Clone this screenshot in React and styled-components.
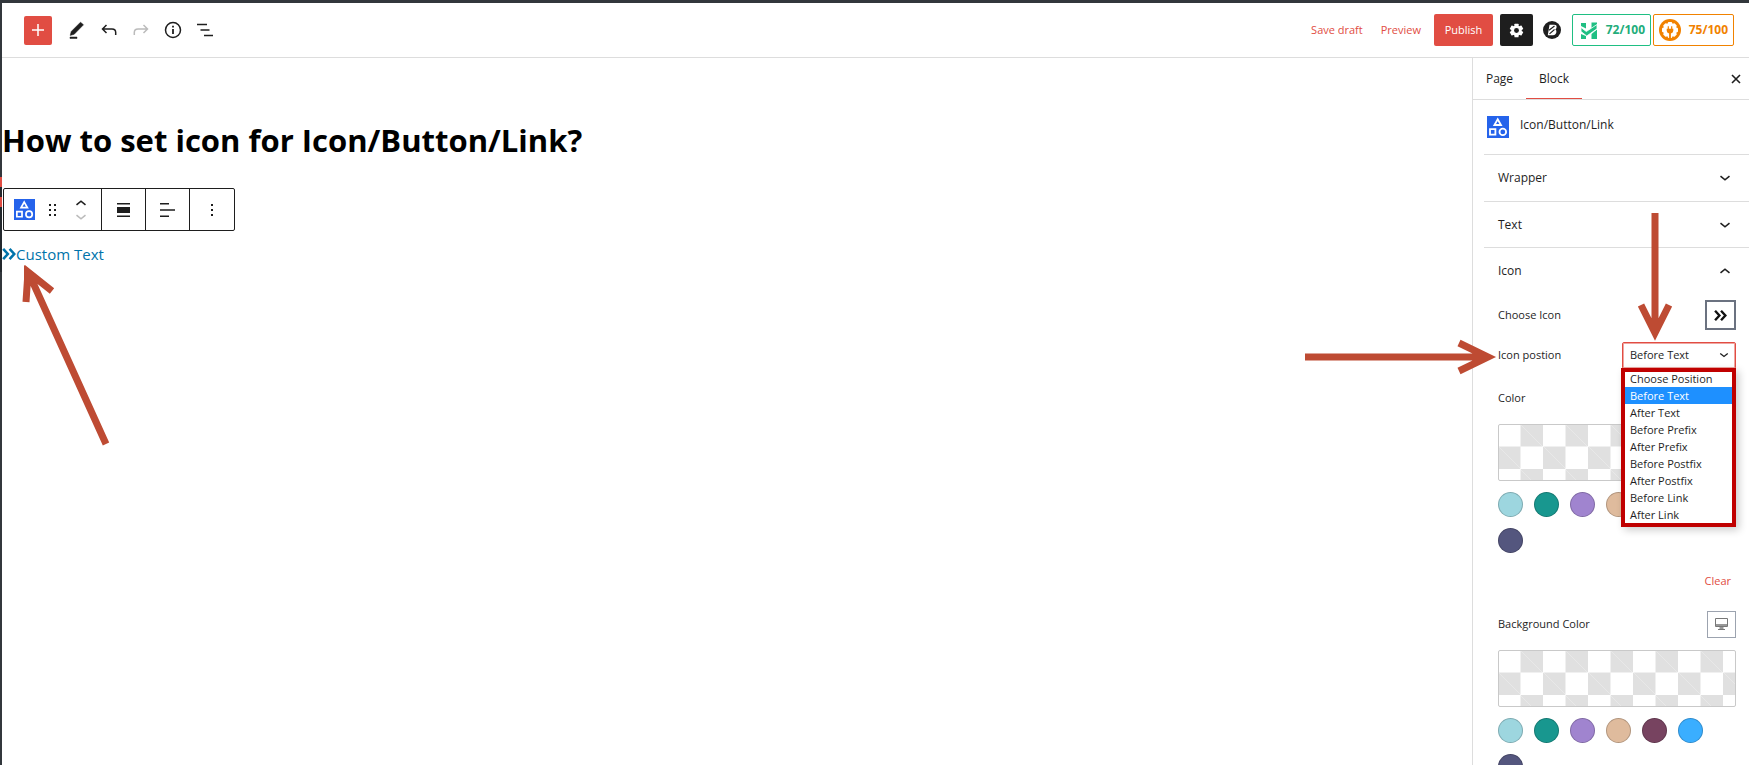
import React, { useState } from "react";
import styled, { createGlobalStyle } from "styled-components";

const ink = "#1e1e1e";
const red = "#e14d43";
const line = "#dddddd";
const arrowRed = "#be4b33";

const GlobalStyle = createGlobalStyle`
  *, *::before, *::after { box-sizing: border-box; }
  body { margin: 0; background: #fff; color: ${ink}; font: 11px/16px "Open Sans", "Noto Sans", sans-serif; }
  button, select { font: inherit; color: inherit; margin: 0; }
  h1, h2, p, ul { margin: 0; padding: 0; }
  svg { display: block; flex: none; }
`;

const Shell = styled.div`
  display: flex;
  height: 100vh;
  overflow: hidden;
  border-top: 3px solid #32373c;
`;

const Rail = styled.div`
  flex: none;
  width: 2px;
  background: linear-gradient(
    #32373c 0 174px, ${red} 174px 184px, #23282d 184px 194px, ${red} 194px 204px,
    #23282d 204px 269px, #32373c 269px
  );
`;

const Editor = styled.div`
  flex: 1;
  min-width: 0;
  display: flex;
  flex-direction: column;
`;

const Header = styled.header`
  flex: none;
  display: flex;
  align-items: center;
  justify-content: space-between;
  height: 55px;
  padding: 0 15px 0 22px;
  border-bottom: 1px solid ${line};
`;

const Tools = styled.div`
  display: flex;
  align-items: center;
  gap: 8px;
`;

const Actions = styled.div`
  display: flex;
  align-items: center;
`;

const IconButton = styled.button`
  display: flex;
  align-items: center;
  justify-content: center;
  width: ${(p) => p.$w || 24}px;
  height: ${(p) => p.$h || 24}px;
  padding: 0;
  border: 0;
  border-radius: 2px;
  background: ${(p) => p.$bg || "transparent"};
  color: ${(p) => p.$color || ink};
`;

const AddButton = styled(IconButton)`
  margin-right: 5px;
`;

const GearButton = styled(IconButton)`
  margin: 0 9px 0 7px;
`;

const LinkButton = styled.button`
  padding: 0;
  border: 0;
  background: none;
  color: ${red};
  margin-right: ${(p) => p.$after || 0}px;
`;

const Publish = styled.button`
  height: 32px;
  width: 59px;
  padding: 0;
  border: 0;
  border-radius: 2px;
  background: ${red};
  color: #fff;
`;

const Score = styled.button`
  display: flex;
  align-items: center;
  justify-content: space-between;
  width: ${(p) => p.$w}px;
  height: 32px;
  margin-left: ${(p) => p.$before}px;
  padding: 0 5px;
  border: 1px solid ${(p) => p.$color};
  border-radius: 2px;
  background: #fff;
  color: ${(p) => p.$ink || p.$color};
  font-size: 12px;
  font-weight: 700;
`;

const Lead = styled.span`
  padding-left: 3px;
`;

const Body = styled.div`
  position: relative;
  flex: 1;
  min-height: 0;
  display: flex;
`;

const Canvas = styled.main`
  flex: 1;
  min-width: 0;
  padding: 61px 0 0;
`;

const Title = styled.h1`
  color: #000;
  font-size: 31px;
  line-height: 42px;
  font-weight: 700;
`;

const BlockToolbar = styled.div`
  display: inline-flex;
  height: 43px;
  margin: 27px 0 0 1px;
  border: 1px solid ${ink};
  border-radius: 2px;
`;

const Group = styled.div`
  display: flex;
  align-items: center;
  justify-content: center;
  width: ${(p) => p.$w}px;
  gap: 4px;
  & + & { border-left: 1px solid ${ink}; }
`;

const Movers = styled.div`
  display: flex;
  flex-direction: column;
`;

const CustomLink = styled.a`
  display: flex;
  align-items: center;
  width: fit-content;
  margin-top: 11px;
  color: #0073aa;
  font-size: 15px;
  line-height: 24px;
  text-decoration: none;
`;

const Sidebar = styled.aside`
  flex: none;
  width: 277px;
  overflow: hidden auto;
  scrollbar-width: none;
  border-left: 1px solid ${line};
`;

const Tabs = styled.div`
  display: flex;
  align-items: center;
  height: 42px;
  padding-right: 4px;
  border-bottom: 1px solid ${line};
`;

const Tab = styled.button`
  align-self: stretch;
  width: ${(p) => p.$w}px;
  padding: 0;
  border: 0;
  background: none;
  box-shadow: ${(p) => (p.$active ? `inset 0 -1px ${red}` : "none")};
  font-size: 12px;
`;

const Spacer = styled.div`
  flex: 1;
`;

const BlockCard = styled.div`
  display: flex;
  gap: 11px;
  height: 54px;
  padding: 16px 14px 0;
`;

const CardTitle = styled.h2`
  font-size: 12px;
  font-weight: 500;
  line-height: 18px;
`;

const Panels = styled.div`
  padding-left: 11px;
`;

const PanelToggle = styled.button`
  display: flex;
  align-items: center;
  justify-content: space-between;
  width: 100%;
  height: ${(p) => p.$h || 47}px;
  padding: 0 18px 0 14px;
  border: 0;
  border-top: 1px solid ${line};
  background: none;
  font-size: 12px;
  font-weight: 500;
`;

const PanelBody = styled.div`
  padding: 5px 13px 0 14px;
`;

const Field = styled.div`
  display: flex;
  align-items: center;
  justify-content: space-between;
  height: ${(p) => p.$h}px;
  margin-bottom: ${(p) => p.$after || 0}px;
`;

const Framed = styled.button`
  display: flex;
  align-items: center;
  justify-content: center;
  width: ${(p) => p.$w}px;
  height: ${(p) => p.$h}px;
  padding: 0;
  border: ${(p) => p.$b}px solid ${(p) => p.$color};
  background: #fff;
`;

const SelectWrap = styled.div`
  position: relative;
  display: flex;
  align-items: center;
  width: 114px;
  height: 27px;
`;

const Select = styled.select`
  appearance: none;
  width: 100%;
  height: 100%;
  padding: 0 24px 0 7px;
  border: 1px solid ${red};
  border-radius: 2px;
  outline: 0;
  background: #fff;
  box-shadow: inset 0 0 0 1px ${red}80;
`;

const SelectChevron = styled.span`
  position: absolute;
  right: 7px;
  pointer-events: none;
`;

const Options = styled.ul`
  position: absolute;
  z-index: 1;
  top: 26px;
  left: -1px;
  right: 0;
  border: 4px solid #c00000;
  background: #fff;
  box-shadow: 3px 3px 8px rgba(0, 0, 0, 0.2);
  list-style: none;
`;

const Option = styled.li`
  height: 17px;
  padding-left: 5px;
  line-height: 17px;
  background: ${(p) => (p.$on ? "#1e90ff" : "#fff")};
  color: ${(p) => (p.$on ? "#fff" : ink)};
  &:first-child { height: 15px; line-height: 14px; }
`;

const Checker = styled.button`
  display: block;
  width: 100%;
  height: 57px;
  border: 1px solid #c9c9c9;
  border-radius: 2px;
  background-color: #fff;
  background-image:
    linear-gradient(45deg, #e0e0e0 25%, transparent 25%, transparent 75%, #e0e0e0 75%),
    linear-gradient(45deg, #e0e0e0 25%, transparent 25%, transparent 75%, #e0e0e0 75%);
  background-size: 45px 45px;
  background-position: 0 0, calc(45px / 2) calc(45px / 2);
  background-origin: border-box;
`;

const Swatches = styled.div`
  display: flex;
  flex-wrap: wrap;
  gap: 11px;
  padding-top: 11px;
`;

const Swatch = styled.button`
  width: 25px;
  height: 25px;
  padding: 0;
  border: 1px solid rgba(0, 0, 0, 0.2);
  border-radius: 50%;
  background: ${(p) => p.$color};
`;

const ClearRow = styled.div`
  display: flex;
  justify-content: flex-end;
  padding: 20px 5px 19px 0;
`;

const Arrow = styled.svg`
  position: absolute;
  z-index: 2;
  pointer-events: none;
  top: ${(p) => p.$top}px;
  ${(p) => (p.$left !== undefined ? `left: ${p.$left}px;` : `right: ${p.$right}px;`)}
`;

const BlockIcon = ({ w = 22, h = 22 }) => (
  <svg width={w} height={h} viewBox="0 0 22 22">
    <path fill="#2563eb" d="M0 0h22v22H0z" />
    <g fill="none" stroke="#fff" strokeWidth="1.8">
      <path d="M10.700 3.200 14 9H7.400z" />
      <path d="M3 13.200h5.400v5.400H3z" />
      <circle cx="15.800" cy="15.900" r="3.300" />
    </g>
  </svg>
);

const Chevron = ({ up, w = 12, faint }) => (
  <svg width={w} height={w} viewBox="0 0 12 12" fill="none" stroke={faint ? "#bbb" : ink} strokeWidth="1.6">
    <path d={up ? "M1.500 7.800 6 4.200l4.500 3.600" : "M1.500 4.200 6 7.800l4.500-3.600"} />
  </svg>
);

const Guillemets = ({ w, color }) => (
  <svg width={w} height={w} viewBox="0 0 12 12" fill="none" stroke={color} strokeWidth="2.2">
    <path d="M1 1.600 5 6l-4 4.400M6.500 1.600l4 4.400-4 4.400" />
  </svg>
);

const Undo = ({ flip }) => (
  <svg width="16" height="14" viewBox="0 0 16 14" fill="none" stroke="currentColor" strokeWidth="1.5">
    <g transform={flip ? "matrix(-1 0 0 1 16 0)" : undefined}>
      <path d="M5.500 2 1.500 6l4 4M1.500 6h9.500q3.700 0 3.700 3.500V12" />
    </g>
  </svg>
);

const Gear = () => (
  <svg width="15" height="15" viewBox="0 0 16 16">
    <g fill="#fff">
      {[0, 60, 120].map((a) => (
        <rect key={a} x="5.800" y="0.800" width="4.400" height="14.400" rx="0.600" transform={`rotate(${a} 8 8)`} />
      ))}
      <circle cx="8" cy="8" r="5.500" />
    </g>
    <circle cx="8" cy="8" r="2.600" fill={ink} />
  </svg>
);

const BadgeB = () => (
  <svg width="18" height="18" viewBox="0 0 18 18">
    <circle cx="9" cy="9" r="9" fill={ink} />
    <path fill="#fff" d="M6.500 3.800h4.700q2.600 0 2.400 2.400-.1 1.500-1.200 2.400 1.200.8 1 2.500-.3 3.100-3.500 3.100H4.800z" />
    <path stroke={ink} strokeWidth="1.100" d="M6 9.300 11.500 5M6.500 12.800l5-4.300" />
  </svg>
);

const SeoMark = () => (
  <svg width="16" height="17" viewBox="0 0 16 17" fill="#1fbf83">
    <path d="M0 1h5v5.500L0 4zM10.500.500H16V4l-5.500 4zM0 12l5 2v3H0zM10.500 12l5.500-4.500V17h-5.500z" />
    <path d="m0 5.500 5.300 4L16 2.500v4.300L5.700 14 0 9.500z" stroke="#fff" strokeWidth=".8" />
  </svg>
);

const PlugMark = () => (
  <svg width="22" height="22" viewBox="0 0 22 22">
    <circle cx="11" cy="11" r="11" fill="#f18200" />
    <g fill="#fff">
      {[0, 45, 90, 135].map((a) => (
        <rect key={a} x="8.800" y="3" width="4.400" height="16" rx="1" transform={`rotate(${a} 11 11)`} />
      ))}
      <circle cx="11" cy="11" r="7" />
    </g>
    <path fill="#f18200" d="M8.700 7.300h1.200v2.500h2.200V7.300h1.200v2.500h1v2q0 2.200-2.400 2.700v5h-1.800v-5q-2.400-.5-2.400-2.700v-2h1z" />
  </svg>
);

const options = [
  "Choose Position", "Before Text", "After Text", "Before Prefix", "After Prefix",
  "Before Postfix", "After Postfix", "Before Link", "After Link",
];

const palette = ["#9dd6df", "#18978f", "#a084cf", "#dfbb9d", "#774360", "#3aaeff", "#54567e"];

function Palette({ label }) {
  return (
    <>
      <Checker aria-label={`${label}: none selected`} />
      <Swatches>
        {palette.map((c) => (
          <Swatch key={c} $color={c} aria-label={`${label} ${c}`} />
        ))}
      </Swatches>
    </>
  );
}

export default function App() {
  const [position, setPosition] = useState("Before Text");
  return (
    <>
      <GlobalStyle />
      <Shell>
        <Rail />
        <Editor>
          <Header>
            <Tools>
              <AddButton $w={28} $h={29} $bg={red} $color="#fff" aria-label="Add block">
                <svg width="12" height="12" viewBox="0 0 12 12" stroke="#fff" strokeWidth="1.500"><path d="M6 0v12M0 6h12" /></svg>
              </AddButton>
              <IconButton aria-label="Edit">
                <svg width="16" height="18" viewBox="0 0 16 18" fill={ink}>
                  <path d="m11.500 1.200 3 2.600L5.200 13.300 1.200 14.400 2.200 10.500zM1 16h7v1.500H1z" stroke={ink} strokeWidth=".5" />
                </svg>
              </IconButton>
              <IconButton aria-label="Undo"><Undo /></IconButton>
              <IconButton aria-label="Redo" $color="#bbb"><Undo flip /></IconButton>
              <IconButton aria-label="Details">
                <svg width="18" height="18" viewBox="0 0 18 18" fill="none" stroke={ink} strokeWidth="1.500">
                  <circle cx="9" cy="9" r="7.500" /><path strokeWidth="1.800" d="M9 8v5M9 4.800v1.800" />
                </svg>
              </IconButton>
              <IconButton aria-label="List view">
                <svg width="18" height="14" viewBox="0 0 18 14" stroke={ink} strokeWidth="1.500">
                  <path d="M1 1.500h10M4.500 7h9M8 12.500h9" />
                </svg>
              </IconButton>
            </Tools>
            <Actions>
              <LinkButton $after={18}>Save draft</LinkButton>
              <LinkButton $after={13}>Preview</LinkButton>
              <Publish>Publish</Publish>
              <GearButton $w={33} $h={32} $bg={ink} aria-label="Settings"><Gear /></GearButton>
              <IconButton $w={20} aria-label="Templates"><BadgeB /></IconButton>
              <Score $w={79} $before={10} $color="#1fbf83" $ink="#23ad7b"><Lead><SeoMark /></Lead>72/100</Score>
              <Score $w={81} $before={2} $color="#f18200"><PlugMark />75/100</Score>
            </Actions>
          </Header>
          <Body>
            <Canvas>
              <Title>How to set icon for Icon/Button/Link?</Title>
              <BlockToolbar role="toolbar" aria-label="Block tools">
                <Group $w={97}>
                  <IconButton aria-label="Icon/Button/Link"><BlockIcon w={21} h={21} /></IconButton>
                  <IconButton aria-label="Drag">
                    <svg width="8" height="14" viewBox="0 0 8 14" fill={ink}>
                      {[0, 5, 10].map((y) => <path key={y} d={`M0 ${y + 1}h2v2H0zM5 ${y + 1}h2v2H5z`} />)}
                    </svg>
                  </IconButton>
                  <Movers>
                    <IconButton $h={14} aria-label="Move up"><Chevron up /></IconButton>
                    <IconButton $h={14} aria-label="Move down"><Chevron faint /></IconButton>
                  </Movers>
                </Group>
                <Group $w={44}>
                  <IconButton aria-label="Align">
                    <svg width="13" height="14" viewBox="0 0 13 14" fill={ink}><path d="M0 0h13v1.500H0zM0 4h13v6H0zM0 12.500h13V14H0z" /></svg>
                  </IconButton>
                </Group>
                <Group $w={44}>
                  <IconButton aria-label="Text align">
                    <svg width="15" height="14" viewBox="0 0 15 14" fill={ink}><path d="M0 0h9v1.500H0zM0 6.200h15v1.500H0zM0 12.500h9V14H0z" /></svg>
                  </IconButton>
                </Group>
                <Group $w={45}>
                  <IconButton aria-label="Options">
                    <svg width="2" height="14" viewBox="0 0 2 14" fill={ink}><path d="M0 1h2v2H0zM0 6h2v2H0zM0 11h2v2H0z" /></svg>
                  </IconButton>
                </Group>
              </BlockToolbar>
              <CustomLink href="#custom"><Guillemets w={14} color="#0073aa" />Custom Text</CustomLink>
            </Canvas>

            <Sidebar>
              <Tabs>
                <Tab $w={53}>Page</Tab>
                <Tab $w={56} $active>Block</Tab>
                <Spacer />
                <IconButton $w={18} aria-label="Close settings">
                  <svg width="10" height="10" viewBox="0 0 10 10" stroke={ink} strokeWidth="1.600"><path d="m1 1 8 8M9 1 1 9" /></svg>
                </IconButton>
              </Tabs>
              <BlockCard>
                <BlockIcon />
                <CardTitle>Icon/Button/Link</CardTitle>
              </BlockCard>
              <Panels>
                <PanelToggle>Wrapper<Chevron /></PanelToggle>
                <PanelToggle $h={46}>Text<Chevron /></PanelToggle>
                <PanelToggle>Icon<Chevron up /></PanelToggle>
                <PanelBody>
                  <Field $h={32}>
                    Choose Icon
                    <Framed $w={31} $h={30} $b={2} $color="#6b7280" aria-label="Choose Icon"><Guillemets w={13} color="#111" /></Framed>
                  </Field>
                  <Field $h={48}>
                    <label htmlFor="icon-position">Icon postion</label>
                    <SelectWrap>
                      <Select id="icon-position" value={position} onChange={(e) => setPosition(e.target.value)}>
                        {options.map((o) => <option key={o}>{o}</option>)}
                      </Select>
                      <SelectChevron><Chevron w={10} /></SelectChevron>
                      <Options role="listbox" aria-label="Icon postion">
                        {options.map((o) => (
                          <Option key={o} role="option" aria-selected={o === position} $on={o === position} onClick={() => setPosition(o)}>{o}</Option>
                        ))}
                      </Options>
                    </SelectWrap>
                  </Field>
                  <Field $h={38} $after={7}>Color</Field>
                  <Palette label="Color" />
                  <ClearRow><LinkButton>Clear</LinkButton></ClearRow>
                  <Field $h={32} $after={10}>
                    Background Color
                    <Framed $w={29} $h={27} $b={1} $color="#9ca3af" aria-label="Desktop">
                      <svg width="13" height="12" viewBox="0 0 13 12" fill="none" stroke="#777">
                        <path d="M.5.500h12v8H.500zM3 11.500h7" /><path strokeWidth="1.500" d="M.500 7h12M4.500 10h4" />
                      </svg>
                    </Framed>
                  </Field>
                  <Palette label="Background color" />
                </PanelBody>
              </Panels>
            </Sidebar>

            <Arrow $left={20} $top={206} width="94" height="184" viewBox="0 0 94 184">
              <g fill="none" stroke={arrowRed} strokeWidth="7">
                <path d="M84 180 8 12M4 38 6 8l24 19" />
                <path d="M2 1v20L22 17z" fill={arrowRed} stroke="none" />
              </g>
            </Arrow>
            <Arrow $right={252} $top={280} width="192" height="38" viewBox="0 0 192 38">
              <path fill="none" stroke={arrowRed} strokeWidth="7" d="M0 19h180M154 5l29 14-29 14" />
            </Arrow>
            <Arrow $right={75} $top={155} width="38" height="128" viewBox="0 0 38 128">
              <path fill="none" stroke={arrowRed} strokeWidth="7" d="M19 0v118M5 92l14 28 14-28" />
            </Arrow>
          </Body>
        </Editor>
      </Shell>
    </>
  );
}
